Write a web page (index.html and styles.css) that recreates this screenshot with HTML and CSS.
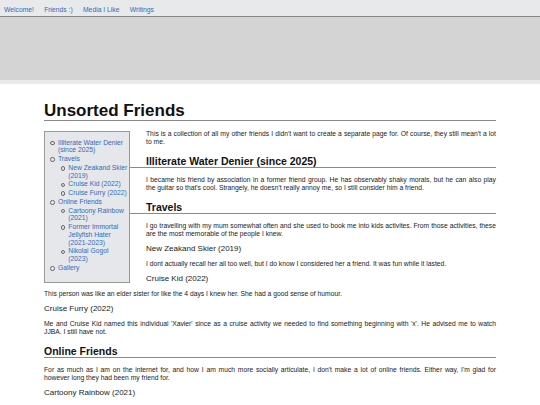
FILE: index.html
```html
<!DOCTYPE html>
<html lang="en">
<head>
<meta charset="utf-8">
<title>Unsorted Friends</title>
<link rel="stylesheet" href="styles.css">
</head>
<body>
<nav class="topnav">
  <a href="#">Welcome!</a>
  <a href="#">Friends :)</a>
  <a href="#">Media I Like</a>
  <a href="#">Writings</a>
</nav>
<div class="banner"></div>
<main class="page">
  <h1 class="title">Unsorted Friends</h1>
  <div class="content">
    <aside class="toc">
      <ul class="toc-list">
        <li><a href="#">Illiterate Water Denier (since 2025)</a></li>
        <li><a href="#">Travels</a>
          <ul class="toc-list sub">
            <li><a href="#">New Zeakand Skier (2019)</a></li>
            <li><a href="#">Cruise Kid (2022)</a></li>
            <li><a href="#">Cruise Furry (2022)</a></li>
          </ul>
        </li>
        <li><a href="#">Online Friends</a>
          <ul class="toc-list sub">
            <li><a href="#">Cartoony Rainbow (2021)</a></li>
            <li><a href="#">Former Immortal Jellyfish Hater (2021-2023)</a></li>
            <li><a href="#">Nikolai Gogol (2023)</a></li>
          </ul>
        </li>
        <li><a href="#">Gallery</a></li>
      </ul>
    </aside>
    <p class="intro">This is a collection of all my other friends I didn't want to create a separate page for. Of course, they still mean't a lot to me.</p>
    <h2>Illiterate Water Denier (since 2025)</h2>
    <p>I became his friend by association in a former friend group. He has observably shaky morals, but he can also play the guitar so that's cool. Strangely, he doesn't really annoy me, so I still consider him a friend.</p>
    <h2>Travels</h2>
    <p>I go travelling with my mum somewhat often and she used to book me into kids activites. From those activities, these are the most memorable of the people I knew.</p>
    <h3>New Zeakand Skier (2019)</h3>
    <p>I dont actually recall her all too well, but I do know I considered her a friend. It was fun while it lasted.</p>
    <h3>Cruise Kid (2022)</h3>
    <p>This person was like an elder sister for like the 4 days I knew her. She had a good sense of humour.</p>
    <h3>Cruise Furry (2022)</h3>
    <p>Me and Cruise Kid named this individual 'Xavier' since as a cruise activity we needed to find something beginning with 'x'. He advised me to watch JJBA. I still have not.</p>
    <h2>Online Friends</h2>
    <p>For as much as I am on the internet for, and how I am much more socially articulate, I don't make a lot of online friends. Either way, I'm glad for however long they had been my friend for.</p>
    <h3>Cartoony Rainbow (2021)</h3>
    <p>This was the first online friend I made, back when I used to hang around on a small art forum with a bunch of other kids of about the same age.</p>
  </div>
</main>
</body>
</html>
```
FILE: styles.css
```css
html, body {
  margin: 0;
  padding: 0;
  background: #ffffff;
  font-family: "Liberation Sans", Arial, sans-serif;
  color: #1a1a1a;
}

a {
  color: #2f6cbc;
  text-decoration: none;
}

.topnav {
  display: flex;
  gap: 10.3px;
  height: 8px;
  padding: 6px 4px 2px;
  background: #e8e9eb;
  border-bottom: 1px solid #858585;
  font-size: 6.75px;
  line-height: 8px;
}

.banner {
  height: 63px;
  background: #d4d4d4;
  border-bottom: 4px solid #e9eaec;
}

.page {
  width: 452px;
  margin: 0 auto;
}

.title {
  margin: 16.5px 0 0;
  font-size: 17px;
  line-height: 19px;
  font-weight: bold;
  color: #111;
  border-bottom: 1px solid #8a8a8a;
}

.content {
  display: flow-root;
}

.toc {
  float: left;
  width: 83.5px;
  margin: 10px 16.5px 6px 0;
  padding: 7px 0 9px 0;
  background: #e6e7ea;
  border: 1px solid #999999;
  font-size: 6.75px;
  line-height: 7.75px;
}

.toc-list {
  margin: 0;
  padding: 0 0 0 13px;
  list-style: none;
}

.toc-list li {
  position: relative;
  margin-bottom: 1px;
}

.toc-list li::before {
  content: "";
  position: absolute;
  left: -7.6px;
  top: 2.4px;
  width: 2.4px;
  height: 2.4px;
  border: 0.6px solid #6a6a6a;
  border-radius: 50%;
}

.toc-list.sub {
  padding-left: 10.3px;
  margin-top: 1px;
}

p {
  margin: 6.5px 0;
  font-size: 6.75px;
  line-height: 8px;
  text-align: justify;
}

.intro {
  margin-top: 9px;
}

h2 {
  margin: 9px 0 8px;
  font-size: 10.5px;
  line-height: 12px;
  font-weight: bold;
  color: #111;
  border-bottom: 1px solid #8a8a8a;
}

h3 {
  margin: 6.5px 0;
  font-size: 8px;
  line-height: 9px;
  font-weight: normal;
  color: #1a1a1a;
}
```
